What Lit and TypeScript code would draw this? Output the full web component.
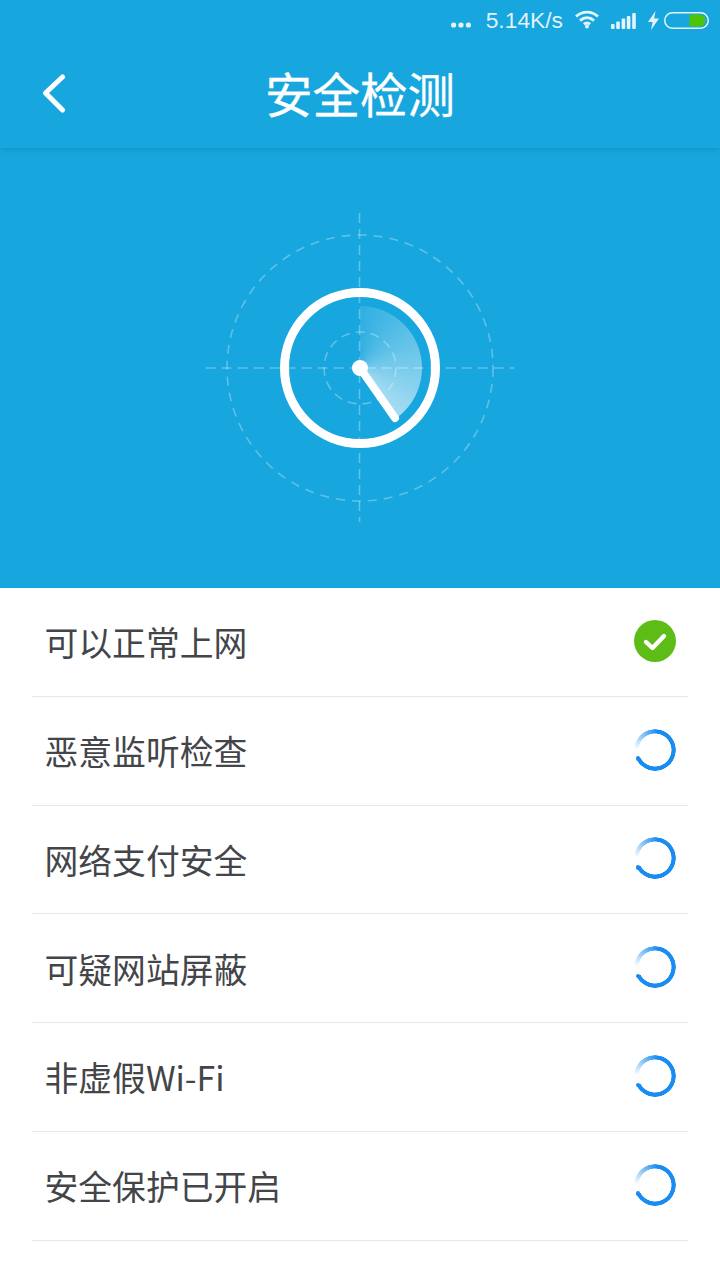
import { LitElement, html, css } from "lit";
import { customElement } from "lit/decorators.js";

const ITEMS: { label: string; done?: boolean }[] = [
  { label: "可以正常上网", done: true },
  { label: "恶意监听检查" },
  { label: "网络支付安全" },
  { label: "可疑网站屏蔽" },
  { label: "非虚假Wi-Fi" },
  { label: "安全保护已开启" },
];

@customElement("app-root")
export class AppRoot extends LitElement {
  static styles = css`
    :host {
      display: block;
      width: 720px;
      height: 1280px;
      background: #fff;
      overflow: hidden;
      font-family: "Noto Sans CJK SC", "Liberation Sans", sans-serif;
    }
    .header {
      position: relative;
      z-index: 1;
      background: #18a6de;
      height: 148px;
      box-shadow: 0 1px 5px rgba(10, 90, 140, 0.32);
      display: flex;
      flex-direction: column;
    }
    .status {
      height: 40px;
      display: flex;
      align-items: center;
      justify-content: flex-end;
      padding-right: 11px;
      gap: 12px;
      color: rgba(255, 255, 255, 0.88);
    }
    .status svg { display: block; flex: none; }
    .speed {
      font: 22.8px/40px "Liberation Sans", Arial, sans-serif;
      margin-left: 3px;
    }
    .batt { margin-left: -7px; }
    .nav {
      flex: 1;
      display: grid;
      grid-template-columns: 1fr auto 1fr;
      align-items: center;
      color: #fff;
      padding-bottom: 3px;
    }
    .back { padding-left: 42px; }
    .back svg { display: block; }
    .title {
      font-size: 47.5px;
      line-height: 60px;
      font-weight: 400;
      -webkit-text-stroke: 0.3px #fff;
    }
    .hero {
      height: 440px;
      background: #18a6de;
      display: flex;
      align-items: center;
      justify-content: center;
    }
    .radar {
      position: relative;
      width: 320px;
      height: 320px;
    }
    .radar svg { position: relative; display: block; z-index: 1; }
    .sector {
      position: absolute;
      left: 98px;
      top: 98px;
      width: 124px;
      height: 124px;
      border-radius: 50%;
      background: conic-gradient(
        rgba(255, 255, 255, 0.1) 0deg,
        rgba(255, 255, 255, 0.62) 145deg,
        transparent 145deg
      );
    }
    .list { padding: 0 32px; }
    .row {
      height: 108.76px;
      box-sizing: border-box;
      border-bottom: 1px solid #e8e8e8;
      display: flex;
      align-items: center;
      justify-content: space-between;
      padding: 0 12px 2px 12.5px;
      font-size: 33.8px;
      color: #434549;
    }
    .row span { position: relative; top: 1px; }
    .row svg { display: block; }
    .spinner {
      width: 42px;
      height: 42px;
      border-radius: 50%;
      background: conic-gradient(
        from 272deg,
        rgba(24, 140, 240, 0) 0deg,
        #188cf0 95deg,
        #188cf0 330deg,
        rgba(24, 140, 240, 0) 330deg
      );
      -webkit-mask: radial-gradient(circle, transparent 16.2px, #000 16.8px, #000 20.6px, transparent 21.2px);
      mask: radial-gradient(circle, transparent 16.2px, #000 16.8px, #000 20.6px, transparent 21.2px);
    }
    .wrap { position: relative; width: 42px; height: 42px; }
    .cap {
      position: absolute;
      left: 1.8px;
      top: 27.8px;
      width: 4.4px;
      height: 4.4px;
      border-radius: 50%;
      background: #188cf0;
    }
  `;

  private radar() {
    return html`<div class="radar">
      <div class="sector"></div>
      <svg width="320" height="320" viewBox="0 0 320 320" fill="none">
        <g stroke="#fff" stroke-opacity=".3" stroke-width="1.6">
          <circle cx="160" cy="160" r="133" stroke-dasharray="9 7"></circle>
          <circle cx="160" cy="160" r="36" stroke-dasharray="9 6"></circle>
          <path d="M5.5 160H314.5" stroke-dasharray="10 6"></path>
          <path d="M159.5 5V314" stroke-dasharray="10 6"></path>
        </g>
        <circle cx="160" cy="160" r="75.5" stroke="#fff" stroke-width="9"></circle>
        <circle cx="160" cy="160" r="8" fill="#fff"></circle>
        <path d="M160 160L195 210" stroke="#fff" stroke-width="8" stroke-linecap="round"></path>
      </svg>
    </div>`;
  }

  private statusIcon() {
    return html`
      <svg width="20" height="6" viewBox="0 0 20 6" fill="currentColor" style="margin-top:10px">
        <circle cx="2.6" cy="3" r="2.6"></circle><circle cx="10" cy="3" r="2.6"></circle><circle cx="17.4" cy="3" r="2.6"></circle>
      </svg>
      <span class="speed">5.14K/s</span>
      <svg width="24" height="19" viewBox="0 0 24 19" fill="none" stroke="currentColor" stroke-width="2.8" style="margin-bottom:2px">
        <path d="M1 6.5C7.5 .6 16.5 .6 23 6.5"></path>
        <path d="M5 10.6C9.3 6.8 14.7 6.8 19 10.6"></path>
        <path d="M8.8 14.2C10.7 12.7 13.3 12.7 15.2 14.2"></path>
        <circle cx="12" cy="16.6" r="2" fill="currentColor" stroke="none"></circle>
      </svg>
      <svg width="25" height="16" viewBox="0 0 25 16" fill="currentColor" style="margin-top:2px">
        <rect x="0" y="11" width="3.6" height="5" rx="1"></rect>
        <rect x="5.2" y="8.5" width="3.6" height="7.5" rx="1"></rect>
        <rect x="10.6" y="5.5" width="3.6" height="10.5" rx="1"></rect>
        <rect x="15.8" y="3" width="3.6" height="13" rx="1"></rect>
        <rect x="21.2" y="0" width="3.6" height="16" rx="1"></rect>
      </svg>
      <svg width="11" height="19" viewBox="0 0 11 19" fill="currentColor">
        <path d="M7.5 0L0 11H4.6L3 19L11 7.5H6.2Z"></path>
      </svg>
      <svg class="batt" width="45" height="17" viewBox="0 0 45 17" fill="none">
        <rect x=".75" y=".75" width="43.5" height="15.5" rx="7.7" stroke="currentColor" stroke-width="1.5"></rect>
        <path d="M25.5 2.5H35.5A6 6 0 0 1 35.5 14.5H25.5Z" fill="#4fc30c"></path>
      </svg>`;
  }

  private indicator(done?: boolean) {
    if (done) {
      return html`<svg width="42" height="42" viewBox="0 0 42 42" fill="none">
        <circle cx="21" cy="21" r="21" fill="#5dbd16"></circle>
        <path d="M12 22L18.5 28L30 16" stroke="#fff" stroke-width="4.4" stroke-linecap="round" stroke-linejoin="round"></path>
      </svg>`;
    }
    return html`<div class="wrap"><div class="spinner"></div><div class="cap"></div></div>`;
  }

  render() {
    return html`
      <div class="header">
        <div class="status">${this.statusIcon()}</div>
        <div class="nav">
          <div class="back">
            <svg width="24" height="40" viewBox="0 0 24 40" fill="none">
              <path d="M20.5 4L3.5 20L20.5 37" stroke="#fff" stroke-width="5" stroke-linecap="round" stroke-linejoin="round"></path>
            </svg>
          </div>
          <div class="title">安全检测</div>
          <div></div>
        </div>
      </div>
      <div class="hero">${this.radar()}</div>
      <div class="list">
        ${ITEMS.map(
          (i) => html`<div class="row"><span>${i.label}</span>${this.indicator(i.done)}</div>`
        )}
      </div>
    `;
  }
}
